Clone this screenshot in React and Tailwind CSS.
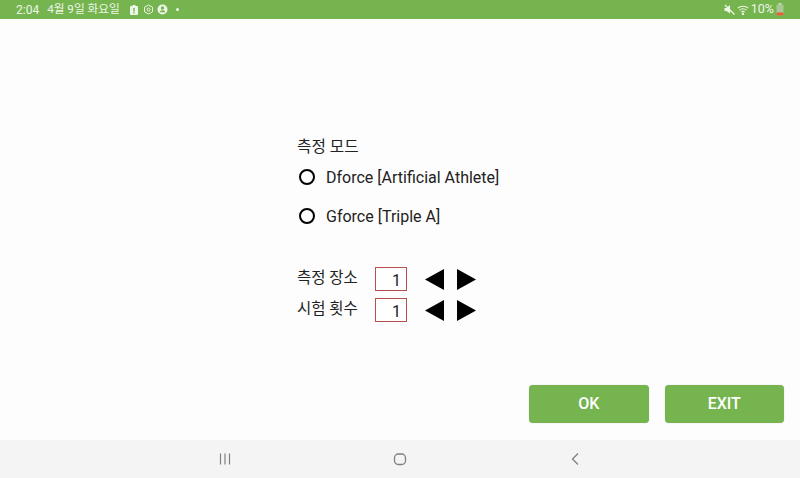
const font = "font-['Roboto','Noto_Sans_CJK_KR',sans-serif]";

const Battery = () => (
  <svg className="ml-[2px]" width="8" height="13" viewBox="0 0 8 13">
    <rect x="2.500" y="0" width="3" height="2" fill="#c9d9bd" />
    <rect x="0.500" y="1.500" width="7" height="11" rx="1" fill="#a9c795" />
    <rect x="0.500" y="9.500" width="7" height="3" rx="1" fill="#e0603a" />
  </svg>
);

const Radio = ({ label }) => (
  <div className="flex h-[24px] items-center">
    <span className="mb-[2px] ml-[2px] h-[16px] w-[16px] rounded-full border-2 border-black" />
    <span className="ml-[11px] text-[16px] text-[#222]">{label}</span>
  </div>
);

const Arrows = () => (
  <div className="ml-[18px] flex items-center gap-[11px]">
    <svg width="20" height="21" viewBox="0 0 20 21"><path d="M0 10.500 19 0v21z" fill="#000" /></svg>
    <svg width="20" height="21" viewBox="0 0 20 21"><path d="M20 10.500 1 0v21z" fill="#000" /></svg>
  </div>
);

const Counter = ({ label }) => (
  <div className="flex h-[24px] items-center">
    <span className="w-[78px] text-[15.5px] text-[#222]">{label}</span>
    <div className="flex h-[24px] w-[32px] items-center justify-end border border-[#b5504f] bg-white pr-[5px] pt-[3px] text-[16px] text-[#222]">1</div>
    <Arrows />
  </div>
);

const Button = ({ label }) => (
  <button className="flex h-[38px] w-[119.5px] items-center justify-center rounded-[4px] bg-[#75b44f] text-[16px] font-medium text-white shadow-[0_0_1px_rgba(0,0,0,0.3)]">
    {label}
  </button>
);

export default function App() {
  return (
    <div className={`flex h-[478px] w-[800px] flex-col overflow-hidden bg-[#fdfdfd] ${font}`}>
      {/* status bar */}
      <div className="flex h-[19px] items-center justify-between bg-[#75b44f] pl-[16px] pr-[16px] text-[12px] text-[#eef6e8]">
        <div className="flex items-center">
          <span>2:04</span>
          <span className="ml-[8px] text-[11.7px]">4월 9일 화요일</span>
          <svg className="ml-[10px]" width="8" height="10" viewBox="0 0 8 10">
            <path d="M2.500 0h3v1H7a1 1 0 0 1 1 1v7a1 1 0 0 1-1 1H1a1 1 0 0 1-1-1V2a1 1 0 0 1 1-1h1.500z" fill="#eef6e8" />
            <rect x="3.300" y="3" width="1.400" height="3.500" fill="#75b44f" />
            <rect x="3.300" y="7.200" width="1.400" height="1.300" fill="#75b44f" />
          </svg>
          <svg className="ml-[5px]" width="11" height="11" viewBox="0 0 11 11" fill="none" stroke="#eef6e8">
            <path d="M5.500 1 9.500 3.200v4.600L5.500 10 1.500 7.800V3.200z" />
            <circle cx="5.500" cy="5.500" r="1.500" />
          </svg>
          <svg className="ml-[3px]" width="11" height="11" viewBox="0 0 11 11">
            <circle cx="5.500" cy="5.500" r="5" fill="#eef6e8" />
            <circle cx="5.500" cy="4" r="1.700" fill="#75b44f" />
            <path d="M2.500 8.300c.6-1.400 1.700-2 3-2s2.400.6 3 2z" fill="#75b44f" />
          </svg>
          <span className="ml-[8px] h-[3px] w-[3px] rounded-full bg-[#eef6e8]" />
        </div>
        <div className="flex items-center">
          <svg width="11" height="11" viewBox="0 0 11 11">
            <path d="M0.500 4h2L6 1v8.500L2.500 7h-2z" fill="#eef6e8" />
            <path d="M1 1l9.500 9.500" stroke="#eef6e8" strokeWidth="1.300" />
          </svg>
          <svg className="ml-[2px]" width="12" height="10" viewBox="0 0 12 10" fill="none" stroke="#eef6e8" strokeWidth="1.100">
            <path d="M.7 3.200c3-2.700 7.600-2.700 10.600 0" />
            <path d="M2.500 5.200c2-1.700 5-1.700 7 0" />
            <path d="M4.300 7.100c1-.8 2.400-.8 3.400 0" />
            <circle cx="6" cy="8.900" r=".6" fill="#eef6e8" />
          </svg>
          <span className="ml-[2px] text-[12.5px]">10%</span>
          <Battery />
        </div>
      </div>

      {/* main area */}
      <div className="flex flex-1 flex-col justify-between">
        <div className="ml-[297px] pt-[117px]">
          <div className="flex h-[22px] items-center text-[15.7px] text-[#222]">측정 모드</div>
          <div className="mt-[8px] flex flex-col gap-[15px]">
            <Radio label="Dforce [Artificial Athlete]" />
            <Radio label="Gforce [Triple A]" />
          </div>
          <div className="mt-[38px] flex flex-col gap-[7px]">
            <Counter label="측정 장소" />
            <Counter label="시험 횟수" />
          </div>
        </div>
        <div className="flex justify-end gap-[16px] pb-[17px] pr-[16px]">
          <Button label="OK" />
          <Button label="EXIT" />
        </div>
      </div>

      {/* nav bar */}
      <div className="flex h-[38px] items-center justify-center gap-[161px] bg-[#f4f4f4]">
        <svg width="14" height="14" viewBox="0 0 14 14" fill="none" stroke="#808080" strokeWidth="1.200">
          <path d="M2.500 1.500v11M7 1.500v11M11.500 1.500v11" />
        </svg>
        <svg width="14" height="14" viewBox="0 0 14 14" fill="none" stroke="#808080" strokeWidth="1.300">
          <rect x="1.500" y="2" width="11" height="10.500" rx="3.800" />
        </svg>
        <svg width="14" height="14" viewBox="0 0 14 14" fill="none" stroke="#808080" strokeWidth="1.300">
          <path d="M10 1.500 4.500 7l5.500 5.500" />
        </svg>
      </div>
    </div>
  );
}
